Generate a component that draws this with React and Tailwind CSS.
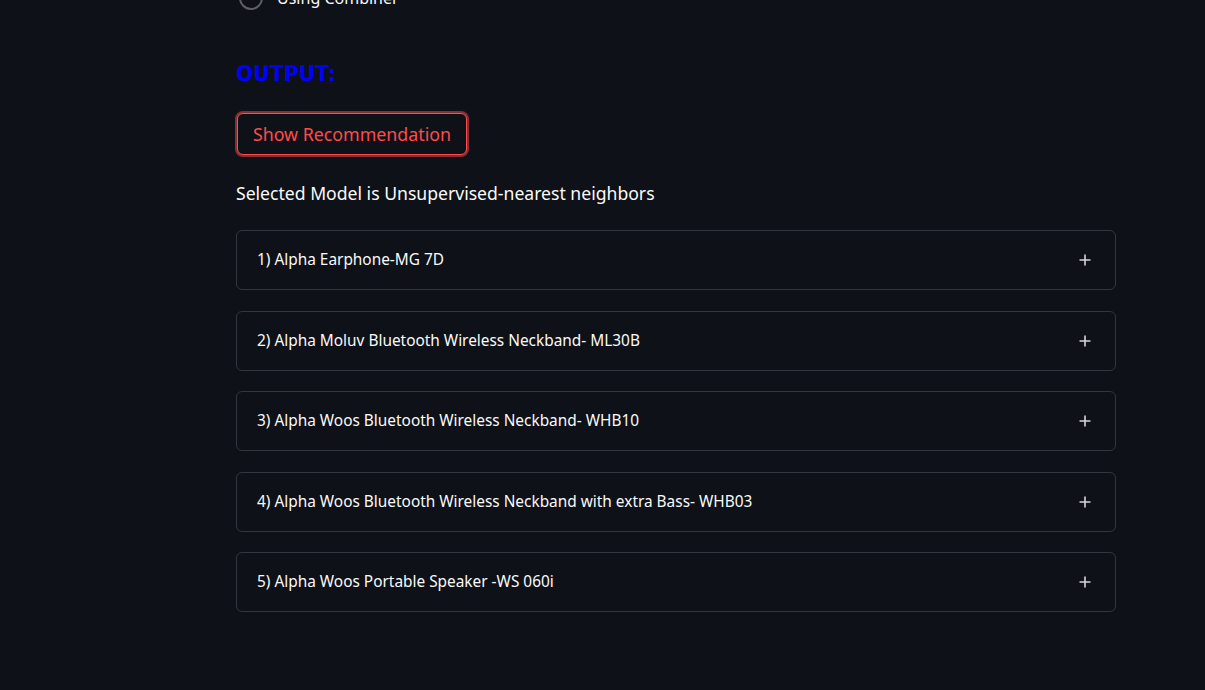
import React from 'react';

const items = [
  '1) Alpha Earphone-MG 7D',
  '2) Alpha Moluv Bluetooth Wireless Neckband- ML30B',
  '3) Alpha Woos Bluetooth Wireless Neckband- WHB10',
  '4) Alpha Woos Bluetooth Wireless Neckband with extra Bass- WHB03',
  '5) Alpha Woos Portable Speaker -WS 060i',
];

const PlusIcon = () => (
  <svg width="14" height="14" viewBox="0 0 14 14" fill="none">
    <path d="M7 1.5v11M1.5 7h11" stroke="#d6d6d9" strokeWidth="1.6" />
  </svg>
);

export default function App() {
  return (
    <div
      className="min-h-[690px] w-full overflow-hidden bg-[#0e1117] text-[#fafafa]"
      style={{ fontFamily: '"Noto Sans", "Open Sans", sans-serif' }}
    >
      <div className="ml-[236px] w-[880px]">
        {/* radio cut off at top */}
        <div className="mt-[-14px] flex items-center gap-[14px] pl-[3px]">
          <span className="box-border h-[24px] w-[24px] rounded-full border-2 border-[#5e6066]" />
          <span className="text-[16px] leading-[24px]">Using Combiner</span>
        </div>

        <h2
          className="mt-[49px] text-[20.4px] font-bold leading-[30px] text-[#0000ff]"
          style={{ fontFamily: '"DejaVu Sans", sans-serif' }}
        >
          OUTPUT:
        </h2>

        <button
          className="mt-[24px] ml-[1px] h-[42px] w-[230px] rounded-[6px] border border-[#ff4b4b] bg-[#0e1117] text-[17.8px] text-[#ff4b4b] shadow-[0_0_0_2px_rgba(255,75,75,0.5)]"
        >
          Show Recommendation
        </button>

        <p className="mt-[25px] text-[17.6px] leading-[26px]">
          Selected Model is Unsupervised-nearest neighbors
        </p>

        <div className="mt-[24px] flex flex-col gap-[20.5px]">
          {items.map((t) => (
            <div
              key={t}
              className="flex h-[60px] items-center justify-between rounded-[6px] border border-[#33363e] px-[20px]"
            >
              <span className="text-[15.4px]">{t}</span>
              <span className="mr-[3px] flex items-center">
                <PlusIcon />
              </span>
            </div>
          ))}
        </div>
      </div>
    </div>
  );
}
